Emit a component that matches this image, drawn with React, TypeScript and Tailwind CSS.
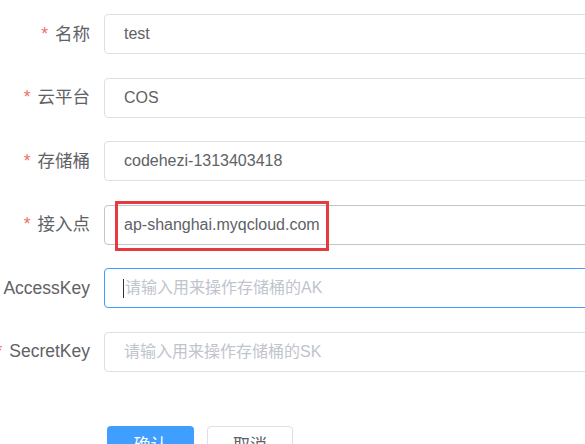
const fields = [
  { label: "名称", required: true, value: "test" },
  { label: "云平台", required: true, value: "COS" },
  { label: "存储桶", required: true, value: "codehezi-1313403418" },
  { label: "接入点", required: true, value: "ap-shanghai.myqcloud.com", hover: true },
  { label: "AccessKey", required: false, placeholder: "请输入用来操作存储桶的AK", focus: true },
  { label: "SecretKey", required: true, placeholder: "请输入用来操作存储桶的SK" },
];

export default function App() {
  return (
    <div
      className="relative h-[444px] w-[585px] overflow-hidden bg-white text-[16px] text-[#606266]"
      style={{ fontFamily: '"Liberation Sans", Arial, "Noto Sans CJK SC", sans-serif' }}
    >
      <div className="flex flex-col gap-[23.5px] pt-[14px]">
        {fields.map((f) => (
          <div key={f.label} className="flex h-[40px] items-center">
            <div className="flex w-[90px] shrink-0 justify-end whitespace-nowrap text-[17.5px]">
              {f.required && <span className="mr-[7px] text-[#f56c6c]">*</span>}
              <span>{f.label}</span>
            </div>
            <div
              className={`ml-[14px] flex h-[40px] w-[500px] shrink-0 items-center rounded-[4px] border px-[19px] ${
                f.focus ? "border-[#409eff]" : f.hover ? "border-[#c0c4cc]" : "border-[#dcdfe6]"
              }`}
            >
              {f.value ? (
                <span className="whitespace-nowrap">{f.value}</span>
              ) : (
                <span className="flex items-center whitespace-nowrap text-[#c0c4cc]">
                  {f.focus && <span className="-ml-[1px] mr-[1px] inline-block h-[19px] w-px bg-[#303133]" />}
                  {f.placeholder}
                </span>
              )}
            </div>
          </div>
        ))}
      </div>

      <div className="ml-[107px] mt-[54px] flex gap-[13px] text-[17px]">
        <button className="h-[40px] w-[87px] rounded-[4px] bg-[#409eff] text-white">确认</button>
        <button className="h-[40px] w-[86px] rounded-[4px] border border-[#dcdfe6] bg-white text-[#606266]">
          取消
        </button>
      </div>

      {/* annotation box */}
      <div className="absolute left-[115px] top-[201px] h-[50px] w-[214px] border-[3px] border-[#e53a3f]" />
    </div>
  );
}
